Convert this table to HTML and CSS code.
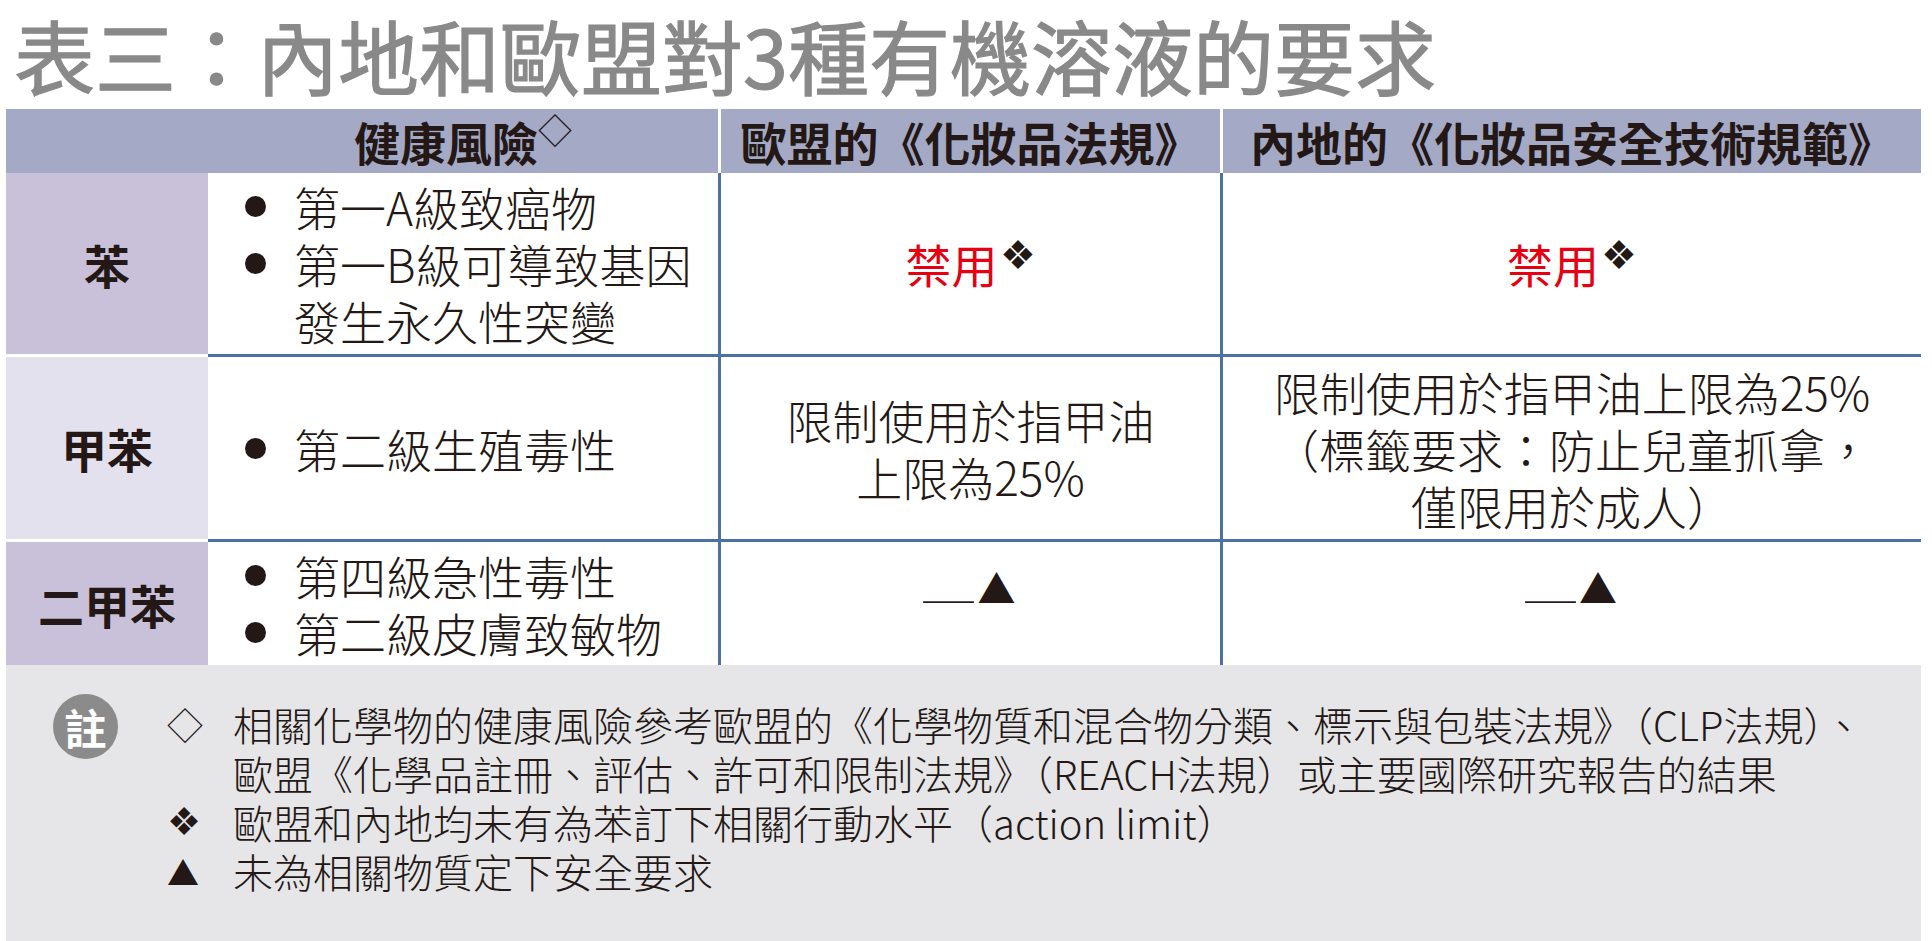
FILE: index.html
```html
<!DOCTYPE html>
<html lang="zh-Hant">
<head>
<meta charset="utf-8">
<title>表三：內地和歐盟對3種有機溶液的要求</title>
<link rel="stylesheet" href="styles.css">
</head>
<body>
<h1 class="title">表三：內地和歐盟對3種有機溶液的要求</h1>
<div class="table">
  <div class="hcell"></div>
  <div class="hcell hdiv">健康風險<span class="hsup">◇</span></div>
  <div class="hcell hdiv">歐盟的《化妝品法規》</div>
  <div class="hcell">內地的《化妝品安全技術規範》</div>

  <div class="name dark sep">苯</div>
  <div class="risk vline hline">
    <ul class="bullets">
      <li>第一A級致癌物</li>
      <li>第一B級可導致基因<br>發生永久性突變</li>
    </ul>
  </div>
  <div class="val vline hline"><span class="ban">禁用</span><span class="vsup">❖</span></div>
  <div class="val hline"><span class="ban">禁用</span><span class="vsup">❖</span></div>

  <div class="name light sep">甲苯</div>
  <div class="risk vline hline">
    <ul class="bullets">
      <li>第二級生殖毒性</li>
    </ul>
  </div>
  <div class="val vline hline">限制使用於指甲油<br>上限為25%</div>
  <div class="val hline">限制使用於指甲油上限為25%<br>（標籤要求：防止兒童抓拿，<br>僅限用於成人）</div>

  <div class="name dark">二甲苯</div>
  <div class="risk vline">
    <ul class="bullets">
      <li>第四級急性毒性</li>
      <li>第二級皮膚致敏物</li>
    </ul>
  </div>
  <div class="val vline"><span class="none"><span class="dash">—</span>▲</span></div>
  <div class="val"><span class="none"><span class="dash">—</span>▲</span></div>
</div>
<div class="notes">
  <div class="badge">註</div>
  <div class="note-list">
    <div class="note"><span class="mark">◇</span><span>相關化學物的健康風險參考歐盟的《化學物質和混合物分類、標示與包裝法規》（CLP法規）、<br>歐盟《化學品註冊、評估、許可和限制法規》（REACH法規）或主要國際研究報告的結果</span></div>
    <div class="note"><span class="mark mark-x">❖</span><span>歐盟和內地均未有為苯訂下相關行動水平（action limit）</span></div>
    <div class="note"><span class="mark mark-t">▲</span><span>未為相關物質定下安全要求</span></div>
  </div>
</div>
</body>
</html>
```

FILE: styles.css
```css
html, body {
  margin: 0;
  padding: 0;
  background: #ffffff;
}
body {
  width: 1932px;
  height: 941px;
  overflow: hidden;
  font-family: "Noto Sans CJK TC", "Noto Sans CJK SC", sans-serif;
  color: #231815;
}
.title {
  margin: 0;
  height: 109px;
  box-sizing: border-box;
  padding: 4px 0 0 14px;
  font-size: 81px;
  line-height: 100px;
  font-weight: 400;
  letter-spacing: 0;
  color: #898989;
  white-space: nowrap;
  -webkit-text-stroke: 1.2px #898989;
}
.table {
  display: grid;
  grid-template-columns: 202px 513px 502px 698px;
  grid-template-rows: 64px 184px 185px 123px;
  margin-left: 6px;
  width: 1915px;
}
.table > div {
  box-sizing: border-box;
  display: flex;
  align-items: center;
  justify-content: center;
  white-space: nowrap;
}
.hcell {
  background: #a4a9c6;
  font-size: 46px;
  font-weight: 700;
  line-height: 1;
}
.hdiv {
  border-right: 3px solid #ffffff;
}
.hsup {
  font-size: 34px;
  font-weight: 400;
  align-self: flex-start;
  margin-top: 4px;
  margin-left: 0;
}
.name {
  font-size: 46px;
  font-weight: 700;
}
.dark {
  background: #c9c1da;
}
.light {
  background: #e4e1ee;
}
.sep {
  border-bottom: 3px solid #ffffff;
}
.vline {
  border-right: 3px solid #4c71a7;
}
.hline {
  border-bottom: 3px solid #4c71a7;
}
.risk {
  justify-content: flex-start !important;
  padding-left: 37px;
}
.bullets {
  list-style: none;
  margin: 0;
  padding: 0;
  font-size: 46px;
  line-height: 57px;
  font-weight: 300;
}
.bullets li {
  display: flex;
  align-items: flex-start;
}
.bullets li::before {
  content: "";
  flex: none;
  width: 21px;
  height: 21px;
  border-radius: 50%;
  background: #231815;
  margin-top: 18px;
  margin-right: 28px;
}
.val {
  font-size: 46px;
  line-height: 57px;
  font-weight: 300;
  text-align: center;
}
.ban {
  color: #e60012;
  font-weight: 400;
}
.vsup {
  font-family: "DejaVu Sans", sans-serif;
  font-size: 40px;
  line-height: 40px;
  align-self: flex-start;
  margin-top: 62px;
  margin-left: 2px;
}
.none {
  font-size: 38px;
  line-height: 38px;
  margin-top: -34px;
}
.dash {
  display: inline-block;
  width: 47px;
  margin-right: 5px;
  text-align: center;
  transform: translateY(10px) scaleX(1.68);
}
.notes {
  margin-left: 6px;
  width: 1915px;
  height: 276px;
  background: #e6e6e8;
  display: flex;
  align-items: flex-start;
  box-sizing: border-box;
  padding-left: 47px;
}
.badge {
  flex: none;
  width: 65px;
  height: 65px;
  margin-top: 29px;
  border-radius: 50%;
  background: #8b8b8b;
  color: #ffffff;
  font-size: 42px;
  font-weight: 700;
  display: flex;
  align-items: center;
  justify-content: center;
  line-height: 1;
}
.note-list {
  margin-left: 49px;
  margin-top: 35px;
  font-size: 40px;
  line-height: 49px;
  font-weight: 300;
  white-space: nowrap;
}
.note {
  display: grid;
  grid-template-columns: 66px auto;
  height: 49px;
}
.note:first-child {
  height: 98px;
}
.mark {
  font-size: 36px;
}
.mark-x {
  font-family: "DejaVu Sans", sans-serif;
  font-size: 38px;
}
.mark-t {
  font-size: 32px;
}
```
